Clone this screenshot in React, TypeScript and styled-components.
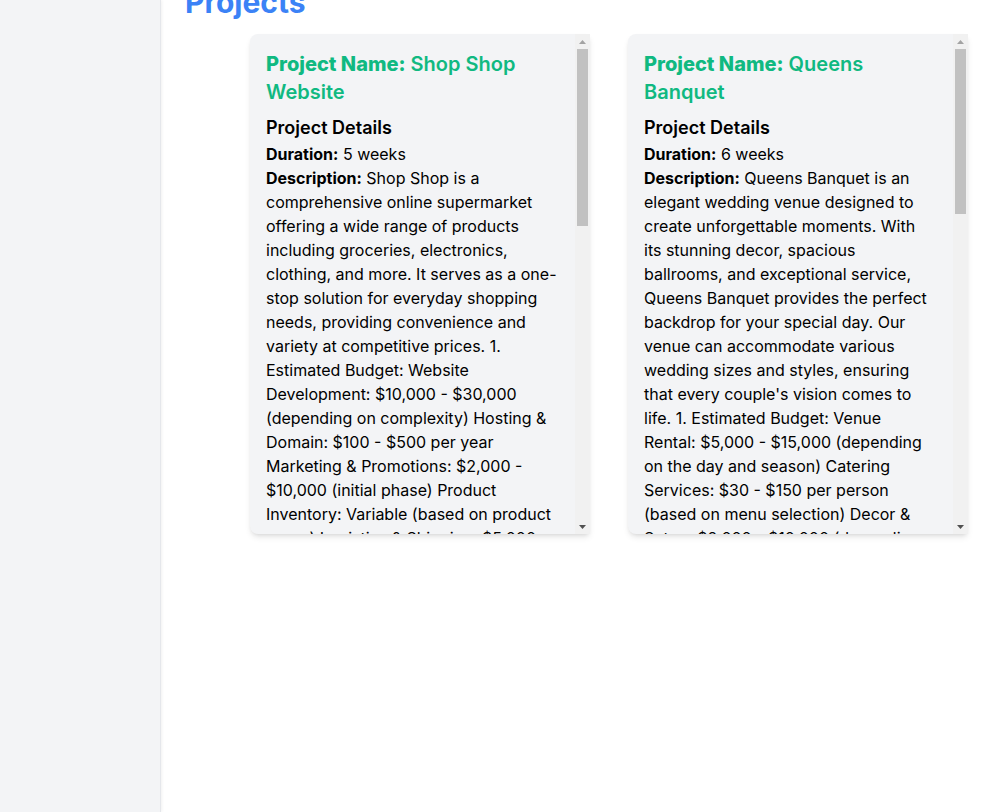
import React from "react";
import styled, { createGlobalStyle } from "styled-components";

interface IProject {
  id: number;
  name: string;
  duration: string;
  description: string;
  thumbHeight: number;
}

const projects: IProject[] = [
  {
    id: 1,
    name: "Shop Shop Website",
    duration: "5 weeks",
    thumbHeight: 177,
    description:
      "Shop Shop is a comprehensive online supermarket offering a wide range of products including groceries, electronics, clothing, and more. It serves as a one-stop solution for everyday shopping needs, providing convenience and variety at competitive prices. 1. Estimated Budget: Website Development: $10,000 - $30,000 (depending on complexity) Hosting & Domain: $100 - $500 per year Marketing & Promotions: $2,000 - $10,000 (initial phase) Product Inventory: Variable (based on product range) Logistics & Shipping: $5,000 - $15,000 (initial setup) Customer Support: $1,000 - $3,000 per month Total Estimated Budget: $18,100 - $58,500 (excluding inventory) 2. Key Features: User-friendly interface with easy navigation and search. Secure payment gateway supporting cards and mobile wallets. Real-time order tracking and delivery notifications. Personalized recommendations based on browsing history. Customer reviews and ratings for every product. 3. Target Audience: Busy professionals, families and students looking for a fast and reliable way to shop for daily essentials from the comfort of their homes. 4. Timeline: Week 1: Planning and design. Week 2-3: Development of core features. Week 4: Testing and bug fixes. Week 5: Launch and marketing campaign.",
  },
  {
    id: 2,
    name: "Queens Banquet",
    duration: "6 weeks",
    thumbHeight: 165,
    description:
      "Queens Banquet is an elegant wedding venue designed to create unforgettable moments. With its stunning decor, spacious ballrooms, and exceptional service, Queens Banquet provides the perfect backdrop for your special day. Our venue can accommodate various wedding sizes and styles, ensuring that every couple's vision comes to life. 1. Estimated Budget: Venue Rental: $5,000 - $15,000 (depending on the day and season) Catering Services: $30 - $150 per person (based on menu selection) Decor & Setup: $2,000 - $10,000 (depending on theme and complexity) Photography & Videography: $1,500 - $5,000 Entertainment: $1,000 - $4,000 (DJ or live band) Staffing: $1,000 - $3,000 Total Estimated Budget: $10,500 - $37,000 (excluding catering) 2. Key Features: Grand ballroom with seating for up to 500 guests. Bridal suite and private lounges for the wedding party. In-house catering with customizable menus. Dedicated event coordinator for every booking. Ample parking and valet service. 3. Target Audience: Couples planning weddings, engagement parties and receptions, as well as families hosting large celebrations and corporate clients seeking a premium venue. 4. Timeline: Week 1: Concept and branding. Week 2-3: Website and booking system. Week 4: Photo shoots and content. Week 5: Testing. Week 6: Launch and promotion.",
  },
];

const App: React.FC = () => {
  return (
    <>
      <GlobalStyle />
      <Layout>
        <Sidebar />
        <Main>
          <Heading>Projects</Heading>
          <CardRow>
            {projects.map((project) => (
              <Card key={project.id}>
                <CardBody>
                  <CardTitle>
                    <strong>Project Name:</strong> {project.name}
                  </CardTitle>
                  <DetailsHeading>Project Details</DetailsHeading>
                  <DetailText>
                    <strong>Duration:</strong> {project.duration}
                  </DetailText>
                  <DetailText>
                    <strong>Description:</strong> {project.description}
                  </DetailText>
                </CardBody>
                <ScrollBar>
                  <ScrollButton>
                    <svg width="7" height="4" viewBox="0 0 7 4">
                      <polygon points="0,4 3.5,0 7,4" fill="#a3a3a3" />
                    </svg>
                  </ScrollButton>
                  <Track>
                    <Thumb style={{ height: project.thumbHeight }} />
                  </Track>
                  <ScrollButton>
                    <svg width="7" height="4" viewBox="0 0 7 4">
                      <polygon points="0,0 7,0 3.5,4" fill="#505050" />
                    </svg>
                  </ScrollButton>
                </ScrollBar>
              </Card>
            ))}
          </CardRow>
        </Main>
      </Layout>
    </>
  );
};

const GlobalStyle = createGlobalStyle`
  * {
    box-sizing: border-box;
    margin: 0;
    padding: 0;
  }

  body {
    font-family: Inter, "Noto Sans", sans-serif;
    color: #000;
    background-color: #fff;
    overflow: hidden;
  }
`;

const Layout = styled.div`
  display: flex;
  height: 100vh;
  overflow: hidden;
`;

const Sidebar = styled.aside`
  width: 161px;
  flex-shrink: 0;
  background-color: #f3f4f6;
  border-right: 1px solid #e5e7eb;
  box-shadow: 1px 0 3px rgba(0, 0, 0, 0.06);
`;

const Main = styled.main`
  flex: 1;
  padding: 0 18px 0 24px;
  margin-top: -16px;
`;

const Heading = styled.h1`
  font-size: 30px;
  line-height: 36px;
  font-weight: 700;
  color: #3b82f6;
  margin-bottom: 14px;
`;

const CardRow = styled.div`
  display: flex;
  justify-content: flex-end;
  gap: 38px;
`;

const Card = styled.div`
  display: flex;
  width: 340px;
  height: 500px;
  background-color: #f3f4f6;
  border-radius: 8px 0 0 8px;
  box-shadow: 0 4px 6px -1px rgba(0, 0, 0, 0.1), 0 2px 4px -2px rgba(0, 0, 0, 0.1);
`;

const CardBody = styled.div`
  flex: 1;
  min-width: 0;
  overflow: hidden;
  padding: 16px;
`;

const ScrollBar = styled.div`
  width: 15px;
  flex-shrink: 0;
  display: flex;
  flex-direction: column;
  background-color: #f1f1f1;
`;

const ScrollButton = styled.div`
  height: 15px;
  flex-shrink: 0;
  display: flex;
  align-items: center;
  justify-content: center;

  svg {
    display: block;
  }
`;

const Track = styled.div`
  flex: 1;
  padding: 0 2px;
`;

const Thumb = styled.div`
  width: 100%;
  background-color: #c1c1c1;
`;

const CardTitle = styled.h2`
  font-size: 20px;
  line-height: 28px;
  font-weight: 600;
  color: #10b981;
  margin-bottom: 8px;

  strong {
    font-weight: 800;
  }
`;

const DetailsHeading = styled.h3`
  font-size: 18px;
  line-height: 28px;
  font-weight: 600;
`;

const DetailText = styled.p`
  font-size: 16px;
  line-height: 24px;

  strong {
    font-weight: 700;
  }
`;

export default App;
